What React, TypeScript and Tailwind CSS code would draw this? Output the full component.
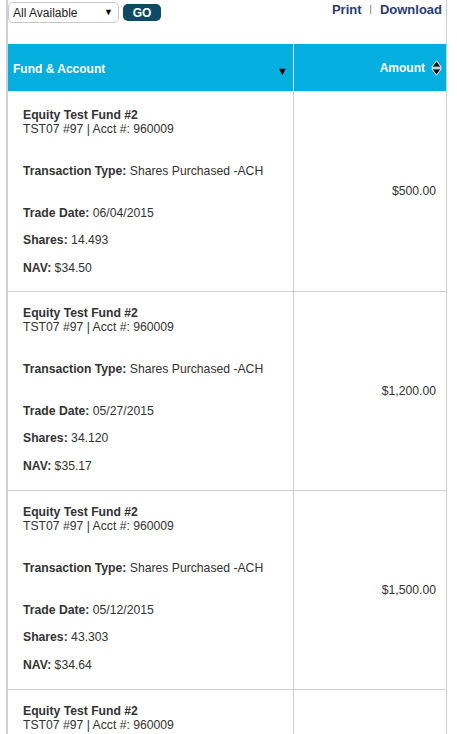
import React from "react";

type Row = { date: string; shares: string; nav: string; amount: string };

const rows: Row[] = [
  { date: "06/04/2015", shares: "14.493", nav: "$34.50", amount: "$500.00" },
  { date: "05/27/2015", shares: "34.120", nav: "$35.17", amount: "$1,200.00" },
  { date: "05/12/2015", shares: "43.303", nav: "$34.64", amount: "$1,500.00" },
  { date: "04/28/2015", shares: "28.902", nav: "$34.60", amount: "$1,000.00" },
];

function SortIcon() {
  return (
    <svg width="11" height="16" viewBox="0 0 11 16" className="ml-[6px]">
      <path d="M5.5 0.8 L10.2 7.2 L0.8 7.2 Z" fill="#111" stroke="#fff" strokeWidth="1" />
      <path d="M5.5 15.2 L10.2 8.8 L0.8 8.8 Z" fill="#111" stroke="#fff" strokeWidth="1" />
    </svg>
  );
}

export default function App() {
  return (
    <div
      className="w-[457px] bg-white text-[#333] text-[12.2px]"
      style={{ fontFamily: '"Liberation Sans", Arial, sans-serif' }}
    >
      <div className="ml-[6px] w-[441px] border-l-2 border-r border-[#d0d0d0]">
        {/* top bar */}
        <div className="h-[44px] flex items-start justify-between pl-0 pr-[4px]">
          <div className="flex items-start pt-[2px]">
            <div className="w-[111px] h-[21px] border border-[#c8c8c8] rounded-[5px] flex items-center justify-between pl-[4px] pr-[5px] text-[12px] text-[#222]">
              <span>All Available</span>
              <span className="text-[9px] text-black">▼</span>
            </div>
            <div className="ml-[4px] mt-[2px] w-[38px] h-[17px] rounded-[5px] bg-[#0d4a63] text-white font-bold text-[12px] flex items-center justify-center">
              GO
            </div>
          </div>
          <div className="flex items-center pt-[2px] text-[13px] font-bold text-[#2a3b78] leading-[15px]">
            <span>Print</span>
            <span className="mx-[8px] text-[#666] text-[9px] font-normal">|</span>
            <span>Download</span>
          </div>
        </div>

        {/* header */}
        <div className="flex h-[48px] bg-[#04afdf] text-white font-bold text-[12px] border-b border-[#cfe9f3]">
          <div className="w-[286px] border-r border-[#bfe6f4] flex items-center justify-between pl-[5px] pr-[5px]">
            <span className="mt-[2px]">Fund &amp; Account</span>
            <span className="text-[11px] text-black mt-[8px]">▼</span>
          </div>
          <div className="flex-1 flex items-center justify-end pr-[4px]">
            <span className="mt-[1px]">Amount</span>
            <SortIcon />
          </div>
        </div>

        {rows.map((r, i) => (
          <div key={i} className="flex border-b border-[#d0d0d0]">
            <div
              className={`w-[286px] border-r border-[#d0d0d0] pl-[15px] ${
                i === 0 ? "pt-[16px] pb-[16px]" : "pt-[14px] pb-[17px]"
              } leading-[14px]`}
            >
              <p className="font-bold">Equity Test Fund #2</p>
              <p>TST07 #97 | Acct #: 960009</p>
              <p className="mt-[28px]">
                <span className="font-bold">Transaction Type:</span> Shares Purchased -ACH
              </p>
              <p className="mt-[28px]">
                <span className="font-bold">Trade Date:</span> {r.date}
              </p>
              <p className="mt-[13px]">
                <span className="font-bold">Shares:</span> {r.shares}
              </p>
              <p className="mt-[14px]">
                <span className="font-bold">NAV:</span> {r.nav}
              </p>
            </div>
            <div className="flex-1 flex items-center justify-end pr-[10px]">{r.amount}</div>
          </div>
        ))}
      </div>
    </div>
  );
}
